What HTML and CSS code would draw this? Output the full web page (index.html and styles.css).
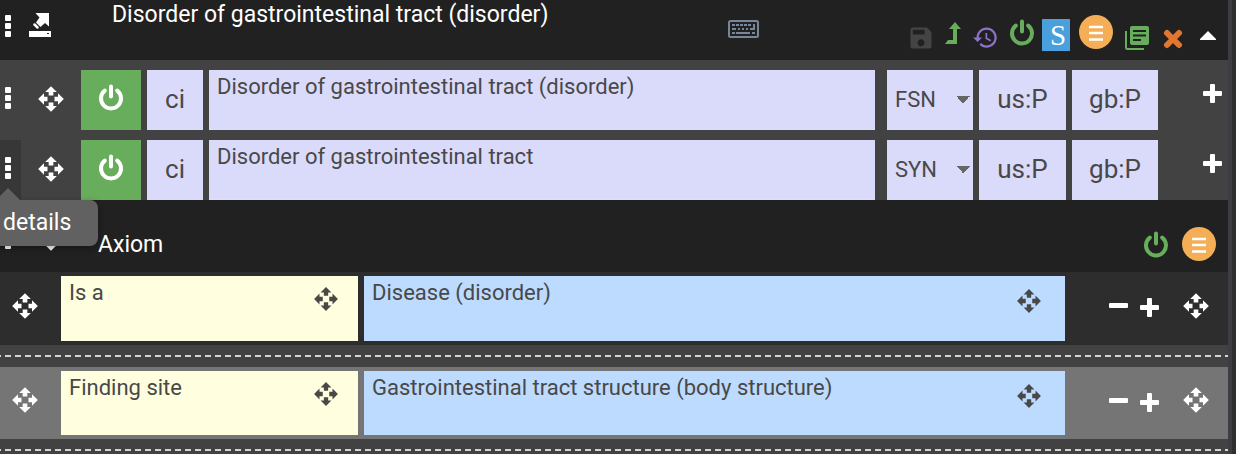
FILE: index.html
```html
<!DOCTYPE html>
<html lang="en">
<head>
<meta charset="utf-8">
<title>Concept editor</title>
<link rel="stylesheet" href="styles.css">
</head>
<body>
<svg class="sprite" aria-hidden="true">
  <symbol id="move" viewBox="0 0 24 24"><path d="M10 9h4V6h3l-5-5-5 5h3v3zm-1 1H6V7l-5 5 5 5v-3h3v-4zm14 2l-5-5v3h-3v4h3v3l5-5zm-9 3h-4v3H7l5 5 5-5h-3v-3z"/></symbol>
  <symbol id="kebab" viewBox="0 0 6 22"><rect width="6" height="6" rx="1"/><rect y="8" width="6" height="6" rx="1"/><rect y="16" width="6" height="6" rx="1"/></symbol>
  <symbol id="power" viewBox="0 0 26 28"><path d="M6.8 6.600A10 10 0 1 0 19.200 6.600M13 2.500v10" fill="none" stroke="currentColor" stroke-width="4" stroke-linecap="round"/></symbol>
  <symbol id="plus" viewBox="0 0 19 19"><path d="M8 0h3q1 0 1 1v6h6q1 0 1 1v3q0 1-1 1h-6v6q0 1-1 1H8q-1 0-1-1v-6H1q-1 0-1-1V8q0-1 1-1h6V1q0-1 1-1z"/></symbol>
  <symbol id="minus" viewBox="0 0 19 19"><rect y="5" width="19" height="5" rx="1"/></symbol>
  <symbol id="menu" viewBox="0 0 34 34"><circle cx="17" cy="17" r="17" fill="#f4ae55"/><path d="M10 12h14M10 18h14M10 24.500h14" stroke="#fff" stroke-width="2.400"/></symbol>
</svg>

<main class="concept">
  <header class="bar">
    <button class="kebab" aria-label="Details"><svg><use href="#kebab"/></svg></button>
    <button class="eject" aria-label="Open concept"><svg viewBox="0 0 22 24"><path d="M6.500 0H20v13.500L16 10l-4.500 4-4.500-4.500L10.500 4.500z"/><path d="M5.500 11.500l3 3" stroke="#fff" stroke-width="2.500" stroke-linecap="round"/><path d="M0 18h22v6H0z"/><path d="M18 20h2v1h-2z" fill="#212121"/></svg></button>
    <h1 class="title">Disorder of gastrointestinal tract (disorder)</h1>
    <button class="keyboard" aria-label="Keyboard shortcuts"><svg viewBox="0 0 31 18"><g fill="none" stroke="#78869a" stroke-width="2"><rect x="1" y="1" width="29" height="16" rx="1.500"/><path d="M4 5h3m1 0h3m1 0h3m1 0h3m1 0h3M4 9h4m2 0h2m2 0h2m2 0h2m2 0h5M26 10V4M4 13h3m1 0h14m2 0h3"/></g></svg></button>
    <div class="tools">
      <button class="tool save" aria-label="Save"><svg viewBox="0 0 24 24"><path d="M17 3H5c-1.110 0-2 .9-2 2v14c0 1.100.89 2 2 2h14c1.100 0 2-.9 2-2V7l-4-4zm-5 16c-1.660 0-3-1.340-3-3s1.340-3 3-3 3 1.340 3 3-1.340 3-3 3zm3-10H5V5h10v4z"/></svg></button>
      <button class="tool promote" aria-label="Promote"><svg viewBox="0 0 18 24"><path d="M11 1l6 7h-4v15H1l3-4h5V8H5z"/></svg></button>
      <button class="tool history" aria-label="History"><svg viewBox="0 0 24 24"><path d="M13 3c-4.970 0-9 4.030-9 9H1l3.890 3.890.07.14L9 12H6c0-3.870 3.130-7 7-7s7 3.130 7 7-3.130 7-7 7c-1.930 0-3.680-.79-4.940-2.060l-1.420 1.420C8.270 19.990 10.510 21 13 21c4.970 0 9-4.030 9-9s-4.030-9-9-9zm-1 5v5l4.280 2.540.72-1.210-3.500-2.080V8H12z"/></svg></button>
      <button class="tool power" aria-label="Inactivate concept"><svg><use href="#power"/></svg></button>
      <button class="schema">S</button>
      <button class="menu" aria-label="Menu"><svg><use href="#menu"/></svg></button>
      <button class="tool notes" aria-label="Feedback"><svg viewBox="0 0 24 24"><path d="M1 5v16.500q0 1.500 1.500 1.500H19" fill="none" stroke="currentColor" stroke-width="2"/><rect x="5" width="19" height="19" rx="2"/><path d="M8 5h13M8 9.500h13M8 14h8" stroke="#212121" stroke-width="2"/></svg></button>
      <button class="tool close" aria-label="Close"><svg viewBox="0 0 20 20"><path d="M4 4l12 12M16 4L4 16" stroke="currentColor" stroke-width="6" stroke-linecap="round"/></svg></button>
      <button class="tool collapse" aria-label="Collapse"><svg viewBox="0 0 16 9"><path d="M8 0l8 8v1H0V8z"/></svg></button>
    </div>
  </header>

  <section class="descriptions">
    <div class="description">
      <button class="kebab" aria-label="Details"><svg><use href="#kebab"/></svg></button>
      <button class="drag" aria-label="Move"><svg><use href="#move"/></svg></button>
      <button class="active" aria-label="Inactivate"><svg><use href="#power"/></svg></button>
      <button class="cell case">ci</button>
      <textarea class="cell term" aria-label="Term">Disorder of gastrointestinal tract (disorder)</textarea>
      <select class="cell type" aria-label="Type"><option>FSN</option><option>SYN</option></select>
      <button class="cell accept us">us:P</button>
      <button class="cell accept">gb:P</button>
      <button class="add" aria-label="Add description"><svg><use href="#plus"/></svg></button>
    </div>
    <div class="description">
      <button class="kebab hovered" aria-label="Details"><svg><use href="#kebab"/></svg><span class="tip">details</span></button>
      <button class="drag" aria-label="Move"><svg><use href="#move"/></svg></button>
      <button class="active" aria-label="Inactivate"><svg><use href="#power"/></svg></button>
      <button class="cell case">ci</button>
      <textarea class="cell term" aria-label="Term">Disorder of gastrointestinal tract</textarea>
      <select class="cell type" aria-label="Type"><option>SYN</option><option>FSN</option></select>
      <button class="cell accept us">us:P</button>
      <button class="cell accept">gb:P</button>
      <button class="add" aria-label="Add description"><svg><use href="#plus"/></svg></button>
    </div>
  </section>

  <div class="bar axiom">
    <button class="kebab" aria-label="Details"><svg><use href="#kebab"/></svg></button>
    <button class="drag" aria-label="Move axiom"><svg><use href="#move"/></svg></button>
    <h2 class="title">Axiom</h2>
    <button class="tool power" aria-label="Inactivate axiom"><svg><use href="#power"/></svg></button>
    <button class="menu" aria-label="Axiom menu"><svg><use href="#menu"/></svg></button>
  </div>

  <div class="relationship">
    <button class="drag" aria-label="Move"><svg><use href="#move"/></svg></button>
    <div class="field attribute"><textarea aria-label="Attribute">Is a</textarea><svg><use href="#move"/></svg></div>
    <div class="field target"><textarea aria-label="Target">Disease (disorder)</textarea><svg><use href="#move"/></svg></div>
    <div class="actions">
      <button aria-label="Remove"><svg><use href="#minus"/></svg></button>
      <button aria-label="Add"><svg><use href="#plus"/></svg></button>
      <button class="drag" aria-label="Move to group"><svg><use href="#move"/></svg></button>
    </div>
  </div>
  <div class="divider"></div>
  <div class="relationship grouped">
    <button class="drag" aria-label="Move"><svg><use href="#move"/></svg></button>
    <div class="field attribute"><textarea aria-label="Attribute">Finding site</textarea><svg><use href="#move"/></svg></div>
    <div class="field target"><textarea aria-label="Target">Gastrointestinal tract structure (body structure)</textarea><svg><use href="#move"/></svg></div>
    <div class="actions">
      <button aria-label="Remove"><svg><use href="#minus"/></svg></button>
      <button aria-label="Add"><svg><use href="#plus"/></svg></button>
      <button class="drag" aria-label="Move to group"><svg><use href="#move"/></svg></button>
    </div>
  </div>
  <div class="divider last"></div>
</main>
</body>
</html>
```

FILE: styles.css
```css
* { box-sizing: border-box; }

body {
  margin: 0;
  background: #2f2f31;
  color: #fff;
  font: 22px/26px Roboto, "Liberation Sans", sans-serif;
}

button, textarea, select {
  margin: 0;
  padding: 0;
  border: 0;
  border-radius: 0;
  background: none;
  color: inherit;
  font: inherit;
  flex: none;
}

svg { display: block; fill: currentColor; }
.sprite { position: absolute; width: 0; height: 0; }

.concept {
  margin-right: 4px;
  border-right: 4px solid #3e3e42;
  background: #424242;
}

.bar {
  display: flex;
  align-items: flex-start;
  height: 60px;
  background: #212121;
}

.title {
  flex: 1;
  margin: 0;
  font-size: 23px;
  font-weight: 400;
  white-space: nowrap;
}

.kebab { width: 21px; padding-left: 5px; }
.kebab svg { width: 6px; height: 22px; }
.drag { width: 60px; display: flex; justify-content: center; }
.drag svg { width: 28px; height: 28px; }

.bar > .kebab { margin-top: 15px; }
.eject { width: 91px; padding: 13px 0 0 8px; }
.eject svg { width: 22px; height: 24px; }
.bar h1 { margin-top: 2px; }

.keyboard { margin: 20px 144px 0 0; }
.keyboard svg { width: 31px; height: 18px; }

.tools { display: flex; align-items: flex-start; }
.tool { display: flex; justify-content: center; }
.save { width: 35px; padding-top: 24px; color: #444; }
.save svg { width: 28px; height: 28px; }
.promote { width: 30px; padding-top: 21px; color: #67ad5b; }
.promote svg { width: 18px; height: 24px; }
.history { width: 35px; padding-top: 24px; color: #8e72c9; }
.history svg { width: 27px; height: 27px; }
.power { width: 37px; padding-top: 19px; color: #67ad5b; }
.power svg { width: 26px; height: 28px; }
.schema {
  width: 28px;
  height: 32px;
  margin: 19px 9px 0 2px;
  padding-left: 4px;
  background: #4a9fdd;
  font: 29px/32px "Liberation Serif", serif;
}
.menu svg { width: 34px; height: 34px; }
.menu { margin-top: 15px; }
.notes { width: 48px; padding-top: 26px; color: #67ad5b; }
.notes svg { width: 24px; height: 24px; }
.close { width: 24px; padding-top: 29px; color: #e0762f; }
.close svg { width: 20px; height: 20px; }
.collapse { width: 43px; padding: 31px 0 0 2px; }
.collapse svg { width: 16px; height: 9px; }

.descriptions {
  display: grid;
  gap: 10px;
  padding-top: 10px;
}

.description { display: flex; height: 60px; }
.description .kebab {
  position: relative;
  display: flex;
  align-items: center;
  padding-bottom: 4px;
}
.description .drag { align-items: center; padding-bottom: 2px; }
.description .kebab.hovered { background: #373737; }

.active {
  display: flex;
  width: 60px;
  align-items: center;
  justify-content: center;
  padding-bottom: 4px;
  background: #67ad5b;
}
.active svg { width: 26px; height: 28px; }

.cell {
  margin-left: 6px;
  background: #dadafb;
  color: #484848;
}
.case { width: 56px; padding-bottom: 2px; font-size: 26px; }
.term {
  flex: 1;
  min-width: 0;
  padding: 4px 8px;
  border-bottom: 1px dotted #e4e4ea;
  resize: none;
  overflow: hidden;
}
.type {
  width: 86px;
  margin-left: 12px;
  padding-left: 8px;
  appearance: none;
  background: conic-gradient(from -45deg at 50% 100%, #666 90deg, transparent 0) 69px 26px / 14px 7px no-repeat, #dadafb;
  background: conic-gradient(from -45deg at 50% 100%, #666 90deg, #dadafb 0) 69px 26px / 14px 7px no-repeat #dadafb;
}
.accept { width: 86px; padding-bottom: 2px; font-size: 26px; }
.us { width: 87px; }
.add {
  display: flex;
  align-items: flex-start;
  width: 70px;
  padding: 14px 0 0 45px;
}
.add svg { width: 19px; height: 19px; }

.tip {
  position: absolute;
  z-index: 1;
  top: 60px;
  left: -8px;
  width: 106px;
  padding: 10px 0 10px 11px;
  border-radius: 8px;
  background: #616161;
  box-shadow: 0 2px 6px #0005;
  font-size: 23px;
  text-align: left;
}
.tip::before {
  content: "";
  position: absolute;
  top: -12px;
  left: 4px;
  border: 12px solid transparent;
  border-top: 0;
  border-bottom-color: #616161;
}

.axiom { height: 72px; }
.axiom > .kebab { margin-top: 27px; }
.axiom > .drag { margin-top: 24px; }
.axiom h2 { margin: 32px 0 0 17px; }
.axiom .power { width: 52px; padding-top: 31px; }
.axiom .menu { margin: 27px 12px 0 0; }

.relationship {
  display: grid;
  grid-template-columns: 55px 297fr 701fr 157px;
  gap: 6px;
  padding: 4px 0;
  background: #2d2d2d;
}
.relationship.grouped { background: #757575; }
.relationship > .drag {
  width: 55px;
  padding: 0 5px 6px 0;
  align-items: center;
}

.field {
  display: flex;
  align-items: flex-start;
  min-width: 0;
  height: 65px;
  padding: 4px 19px 4px 8px;
  color: #484848;
}
.grouped .field { height: 64px; }
.field textarea {
  flex: 1;
  min-width: 0;
  height: 52px;
  resize: none;
  overflow: hidden;
}
.field svg { width: 26px; height: 26px; margin-top: 6px; }
.attribute { background: #ffffdf; }
.target { padding-right: 23px; background: #bddaff; }
.target svg { margin-top: 8px; }
.actions {
  display: flex;
  align-items: center;
  gap: 12px;
  padding: 0 18px 2px 38px;
}
.actions svg { width: 19px; height: 19px; }
.actions .drag { width: 28px; margin-left: 11px; padding-bottom: 4px; }
.actions .drag svg { width: 28px; height: 28px; }

.divider {
  height: 22px;
  background: repeating-linear-gradient(90deg, #d4d4d4 0 1px, transparent 1px 5px, #d4d4d4 5px 10px) 0 10px / 100% 2px no-repeat;
}
.divider.last { height: 15px; }
```
